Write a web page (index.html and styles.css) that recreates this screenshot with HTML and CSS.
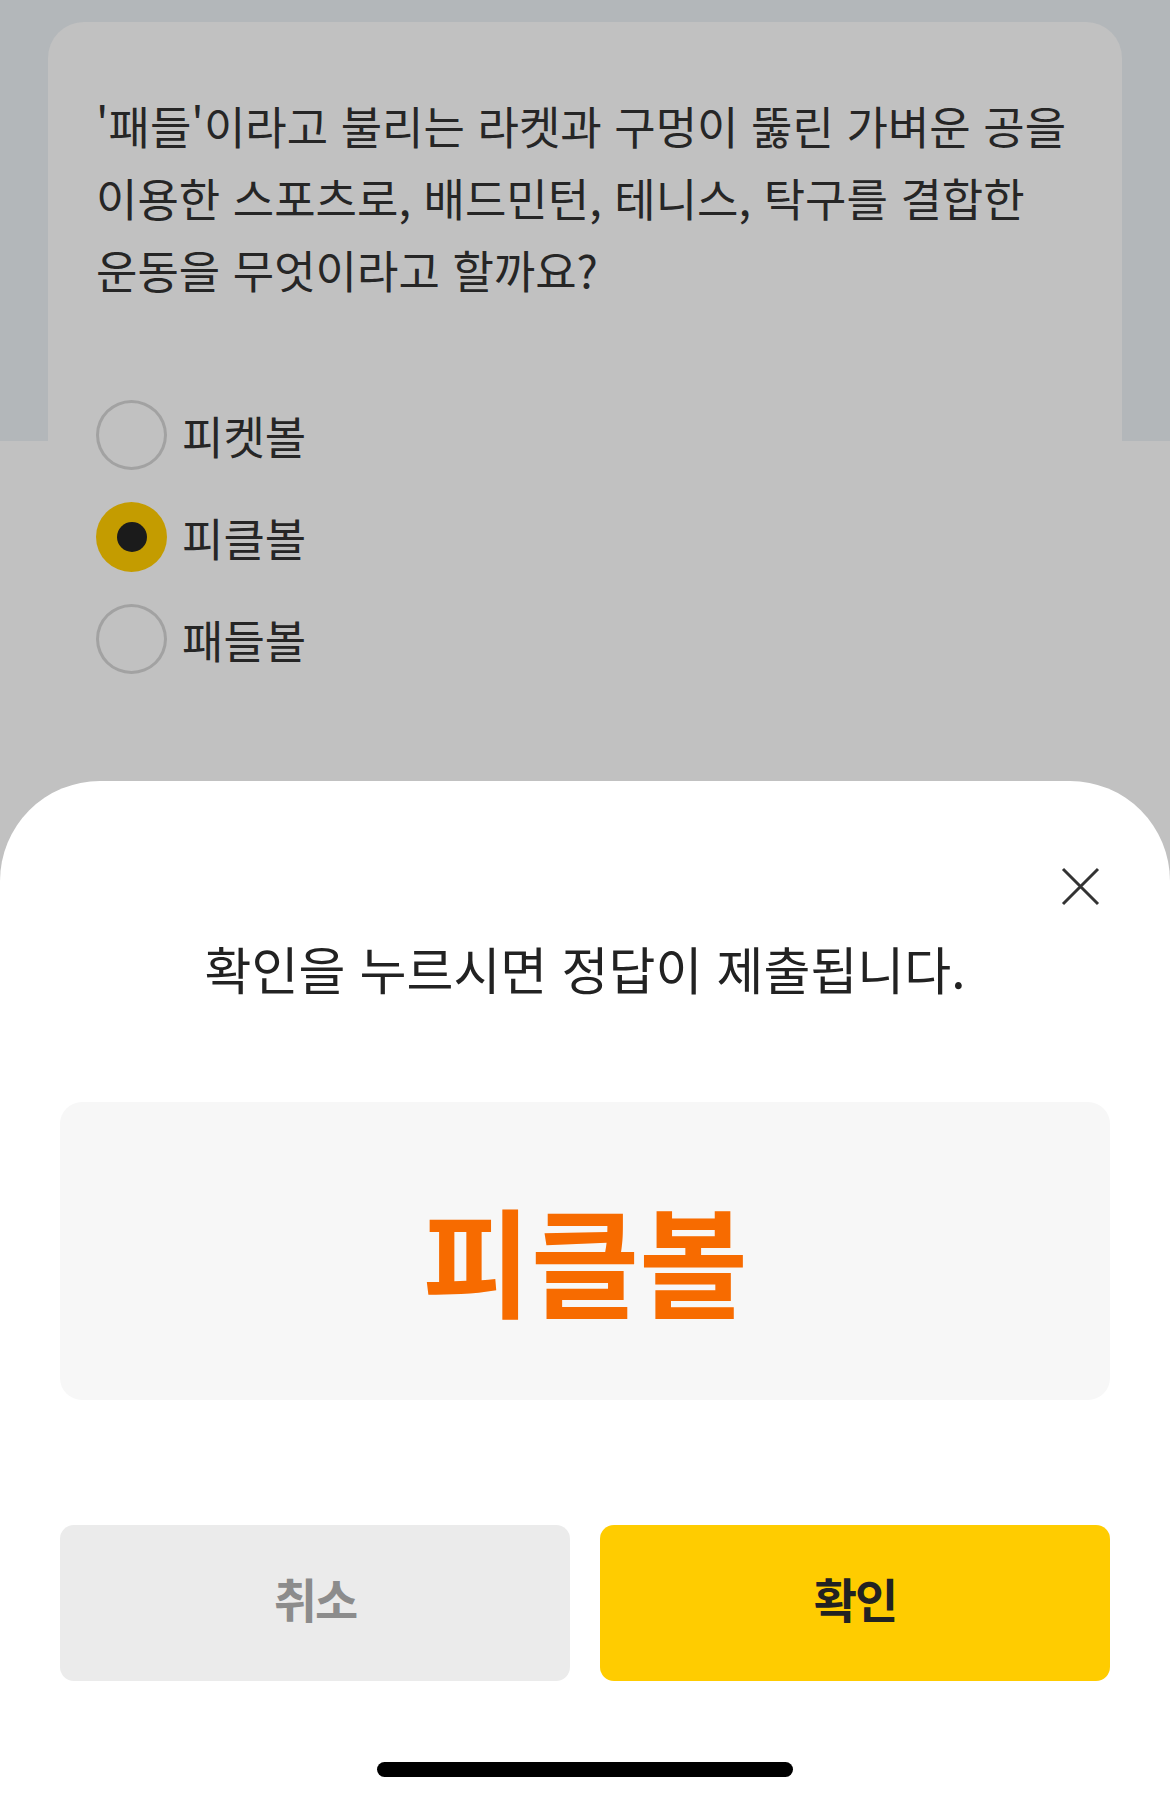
FILE: index.html
```html
<!DOCTYPE html>
<html lang="ko">
  <head>
    <meta charset="UTF-8" />
    <meta name="viewport" content="width=device-width, initial-scale=1.0" />
    <title>퀴즈</title>
    <link rel="stylesheet" href="styles.css">
  </head>
  <body>
    <div class="page">
      <div class="quizCard">
        <p class="question">'패들'이라고 불리는 라켓과 구멍이 뚫린 가벼운 공을 이용한 스포츠로, 배드민턴, 테니스, 탁구를 결합한 운동을 무엇이라고 할까요?</p>

        <ul class="options">
          <li class="option">
            <span class="radio"></span>
            <span class="optionLabel">피켓볼</span>
          </li>
          <li class="option selected">
            <span class="radio"></span>
            <span class="optionLabel">피클볼</span>
          </li>
          <li class="option">
            <span class="radio"></span>
            <span class="optionLabel">패들볼</span>
          </li>
        </ul>
      </div>

      <div class="sheet">
        <div class="sheetTop">
          <button class="closeButton" aria-label="닫기">
            <svg width="39" height="39" viewBox="0 0 39 39">
              <path d="M2 2 L37 37 M37 2 L2 37" stroke="#333" stroke-width="3" fill="none" />
            </svg>
          </button>
        </div>

        <p class="message">확인을 누르시면 정답이 제출됩니다.</p>

        <div class="answerBox">
          <span class="answerText">피클볼</span>
        </div>

        <div class="buttonRow">
          <button class="sheetButton cancel">취소</button>
          <button class="sheetButton confirm">확인</button>
        </div>

        <div class="homeIndicator"></div>
      </div>
    </div>
  </body>
</html>
```

FILE: styles.css
```css
body {
  font-family: "Noto Sans CJK KR", "Noto Sans", sans-serif;
  margin: 0;
  color: #222;
}

.page {
  position: relative;
  width: 1170px;
  height: 1801px;
  overflow: hidden;
  background: linear-gradient(to bottom, #b3b7ba 0, #b3b7ba 441px, #c1c1c1 441px);
}

.quizCard {
  margin: 22px 48px 0;
  padding: 68px 20px 0 48px;
  height: 1000px;
  background-color: #c1c1c1;
  border-radius: 36px 36px 0 0;
}

.question {
  margin: 0;
  font-size: 45px;
  line-height: 72px;
  color: #262626;
  word-break: keep-all;
}

.options {
  list-style: none;
  margin: 94px 0 0;
  padding: 0;
  display: flex;
  flex-direction: column;
  gap: 32px;
}

.option {
  display: flex;
  align-items: center;
  gap: 15px;
  height: 70px;
}

.radio {
  box-sizing: border-box;
  width: 71px;
  height: 70px;
  border: 3px solid #a2a2a2;
  border-radius: 50%;
  display: flex;
  align-items: center;
  justify-content: center;
}

.option.selected .radio {
  border: none;
  background-color: #c49c00;
}

.option.selected .radio::after {
  content: "";
  width: 30px;
  height: 30px;
  border-radius: 50%;
  background-color: #1b1b1b;
}

.optionLabel {
  font-size: 45px;
  color: #262626;
  line-height: 1;
}

.sheet {
  position: absolute;
  left: 0;
  right: 0;
  bottom: 0;
  height: 1020px;
  box-sizing: border-box;
  padding: 0 60px;
  background-color: #fff;
  border-radius: 100px 100px 0 0;
  display: flex;
  flex-direction: column;
}

.sheetTop {
  display: flex;
  justify-content: flex-end;
  margin-top: 86px;
  padding-right: 10px;
}

.closeButton {
  width: 39px;
  height: 39px;
  padding: 0;
  border: none;
  background: none;
  display: block;
}

.closeButton svg {
  display: block;
}

.message {
  margin: 32px 0 3px;
  text-align: center;
  font-size: 51px;
  line-height: 60px;
  color: #222;
}

.answerBox {
  margin-top: 101px;
  height: 298px;
  background-color: #f7f7f7;
  border-radius: 22px;
  display: flex;
  align-items: center;
  justify-content: center;
}

.answerText {
  font-size: 118px;
  font-weight: 700;
  color: #f76b00;
  line-height: 1;
  padding-top: 14px;
}

.buttonRow {
  margin-top: 125px;
  display: flex;
  gap: 30px;
}

.sheetButton {
  flex: 1;
  height: 156px;
  padding: 0 0 12px;
  border: none;
  border-radius: 14px;
  font-family: "Noto Sans CJK KR", "Noto Sans", sans-serif;
  font-size: 47px;
  font-weight: 700;
  letter-spacing: -2px;
}

.cancel {
  background-color: #ebebeb;
  color: #8c8c8c;
}

.confirm {
  background-color: #ffcc00;
  color: #222;
}

.homeIndicator {
  margin: 81px auto 0;
  width: 416px;
  height: 15px;
  border-radius: 8px;
  background-color: #000;
}
```
